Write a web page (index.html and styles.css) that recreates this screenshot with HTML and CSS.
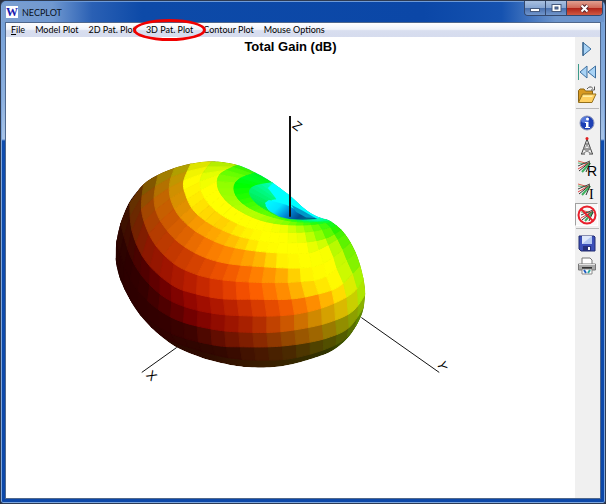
FILE: index.html
```html
<!DOCTYPE html>
<html lang="en">

<head>
    <meta charset="UTF-8">
    <meta name="viewport" content="width=device-width, initial-scale=1.0">
    <title>NECPLOT</title>
    <link rel="stylesheet" href="styles.css">
</head>

<body>
    <div class="window">
        <!-- title bar -->
        <header class="titlebar">
            <span class="logo">W</span>
            <span class="title">NECPLOT</span>
            <div class="controls">
                <button class="ctl min" aria-label="Minimize"><svg width="12" height="9"><rect x="1.500" y="4.500" width="9" height="3" fill="#fff" stroke="#45597c"/></svg></button>
                <button class="ctl max" aria-label="Maximize"><svg width="11" height="9"><rect x="1" y="0.500" width="9" height="7" fill="#fff" stroke="#45597c"/><rect x="4" y="3" width="3" height="2" fill="#5b7cb4" stroke="#45597c"/></svg></button>
                <button class="ctl close" aria-label="Close"><svg width="11" height="9"><path d="M2.500 1.500L8.500 7.500M8.500 1.500L2.500 7.500" stroke="#5b2a30" stroke-width="4"/><path d="M2.500 1.500L8.500 7.500M8.500 1.500L2.500 7.500" stroke="#fff" stroke-width="2"/></svg></button>
            </div>
        </header>

        <div class="client">
            <!-- menu -->
            <nav class="menu">
                <button><u>F</u>ile</button>
                <button>Model Plot</button>
                <button>2D Pat. Plot</button>
                <button class="marked">3D Pat. Plot</button>
                <button>Contour Plot</button>
                <button>Mouse Options</button>
            </nav>

            <div class="work">
                <!-- plot -->
                <main class="plot">
                    <h1>Total Gain (dB)</h1>
                    <svg class="scene" viewBox="0 0 570 440" preserveAspectRatio="xMidYMin meet">
                        <defs>
                            <clipPath id="shape">
                                <path id="outline" d=""/>
                            </clipPath>
                            <linearGradient id="base" x1="0" x2="1" y1="0" y2="0">
                                <stop offset="0" stop-color="#280400"/>
                                <stop offset="0.350" stop-color="#2e0a00"/>
                                <stop offset="0.600" stop-color="#3a1e00"/>
                                <stop offset="0.850" stop-color="#303400"/>
                                <stop offset="1" stop-color="#508000"/>
                            </linearGradient>
                            <linearGradient id="well" x1="0" x2="1" y1="0" y2="0.400">
                                <stop offset="0" stop-color="#00ffff"/>
                                <stop offset="0.350" stop-color="#00e4ff"/>
                                <stop offset="0.600" stop-color="#0088d8"/>
                                <stop offset="0.850" stop-color="#004c90"/>
                                <stop offset="1" stop-color="#006488"/>
                            </linearGradient>
                        </defs>
                        <g class="axis">
                            <path d="M356 263L434 318M171 293L136 318"/>
                            <text transform="translate(146 321) rotate(46)">X</text>
                            <text transform="translate(437 311) rotate(75)">Y</text>
                            <text transform="translate(292 71) rotate(38)">Z</text>
                        </g>
                        <g transform="translate(104 100) scale(0.333333)">
                            <g id="lobe" clip-path="url(#shape)"></g>
                        </g>
                        <path class="axis" d="M284.500 61V162" stroke-width="2"/>
                    </svg>
                </main>

                <!-- tool buttons -->
                <aside class="tools">
                    <button aria-label="Play"><svg viewBox="0 0 20 20"><path d="M6 3.500V16.500L14 10Z" fill="#a9d3f5" stroke="#3d6f9f"/><path d="M6 3V17" stroke="#27527c"/></svg></button>
                    <button aria-label="Rewind"><svg viewBox="0 0 20 20"><path d="M1.500 2V18" stroke="#3c9a8a"/><path d="M10 4V16L3 10ZM18.500 4V16L11 10Z" fill="#a9d3f5" stroke="#3d6f9f"/></svg></button>
                    <button aria-label="Open"><svg viewBox="0 0 20 20"><path d="M1.500 17V5.500L3 4H7L8.500 6H15.500V9" fill="#d99a20" stroke="#8a6414"/><path d="M1.500 17.500L5.500 9H19L15 17.500Z" fill="#ffd060" stroke="#94701c"/><path d="M6 10.500H16L15 12H6Z" fill="#fff0a8"/><path d="M10 4Q13 0 16 3.500M17.500 1.500V5H14" fill="none" stroke="#555"/></svg></button>
                    <hr>
                    <button aria-label="Info"><svg viewBox="0 0 20 20"><circle cx="10" cy="10" r="7" fill="#1c3fb4" stroke="#8a94b8"/><ellipse cx="8" cy="7" rx="4" ry="3" fill="#6d92ea" opacity="0.700"/><circle cx="10.500" cy="6" r="1.500" fill="#fff"/><path d="M8 9H11.500V14H13V15H8V14H9V10H8Z" fill="#fff"/></svg></button>
                    <button aria-label="Antenna"><svg viewBox="0 0 20 20"><path d="M10 3L4.500 18M10 3L15.500 18M4 18H8M12 18H16M8.500 8H11.500M6.500 13H13.500" fill="none" stroke="#444"/><path d="M8.500 8L13.500 13M11.500 8L6.500 13L15 18M13.500 13L5 18" fill="none" stroke="#888"/><circle cx="10" cy="2.500" r="1.500" fill="#e02020"/></svg></button>
                    <button class="wave" aria-label="Real part"><svg viewBox="0 0 20 20"><use href="#rays"/><text x="10" y="17">R</text></svg></button>
                    <button class="wave" aria-label="Imaginary part"><svg viewBox="0 0 20 20"><use href="#rays"/><text class="serif" x="12" y="17">I</text></svg></button>
                    <button class="on" aria-label="No currents"><svg viewBox="0 0 20 20"><use href="#rays" x="3" y="3"/><circle cx="10" cy="10" r="8.500" fill="none" stroke="#e8202c" stroke-width="2"/><path d="M4 4L16 16" stroke="#e8202c" stroke-width="2"/></svg></button>
                    <hr>
                    <button aria-label="Save"><svg viewBox="0 0 20 20"><path d="M2 3H17L18 4V18H4L2 16Z" fill="#3c50b8" stroke="#222c70"/><rect x="5" y="3" width="10" height="8" fill="#dfe8fa"/><path d="M5 11L15 3V11Z" fill="#b4c8f0"/><rect x="6" y="13" width="8" height="5" fill="#26307a"/><rect x="11" y="14" width="2" height="3" fill="#fff"/></svg></button>
                    <button aria-label="Print"><svg viewBox="0 0 20 20"><path d="M5 8V2H13L15 4V8" fill="#fff" stroke="#777"/><path d="M1.500 8H18.500V14H1.500Z" fill="#a8a8a8" stroke="#777"/><path d="M2 8.500H18" stroke="#e4e4e4"/><rect x="5" y="11" width="10" height="2" fill="#333"/><path d="M5 13H15V18H5Z" fill="#fff" stroke="#888"/><path d="M7 14L9 17" stroke="#205cc0" stroke-width="2"/><path d="M11 17L13 14" stroke="#30a8a0" stroke-width="2"/></svg></button>
                </aside>
            </div>
        </div>
    </div>

    <!-- shared ray bundle of the current icons -->
    <svg class="defs" width="0" height="0">
        <defs>
            <g id="rays" fill="none">
                <path d="M1 2L12 5" stroke="#e06050"/>
                <path d="M1 4L12 5" stroke="#58b070"/>
                <path d="M1 7L13 2" stroke="#444"/>
                <path d="M1 10L13 3" stroke="#e04040"/>
                <path d="M2 12L13 3" stroke="#333"/>
                <path d="M5 13L13 4" stroke="#40b060" stroke-width="2"/>
                <path d="M9 13L13 4" stroke="#333"/>
            </g>
        </defs>
    </svg>

    <script src="lobe.js"></script>
</body>

</html>
```

FILE: styles.css
```css
* {
    box-sizing: border-box;
}

body {
    margin: 0;
    background-color: #2b3140;
    font-family: Lato, "Open Sans", sans-serif;
    font-size: 9px;
}

button {
    padding: 0;
    border: 0;
    background: none;
    font: inherit;
    color: inherit;
}

svg {
    display: block;
}

.defs {
    position: absolute;
}

/* window frame */
.window {
    display: flex;
    flex-direction: column;
    min-height: 100vh;
    padding: 0 4px 4px;
    border: 1px solid #2e3b52;
    border-radius: 6px 6px 3px 3px;
    background: linear-gradient(#6d9ad4 0, #8fb2df 100px, #a8c4e8 138px, #0f4cad 140px, #0c47a8 100%);
    box-shadow: inset 0 0 0 1px #7ea6dc;
}

.titlebar {
    display: flex;
    align-items: center;
    height: 21px;
    margin: 0 -3px;
    padding-left: 4px;
    border-top: 1px solid #6d9ad8;
    border-radius: 5px 5px 0 0;
    background: linear-gradient(90deg, #7ca0d0 0, #7098d0 50px, #2a60b4 90px, #0d4aa8 140px, #0b47a7 70%, #1552b0 83%, #6c94cc 92%, #6c94cc 100%);
}

.logo {
    width: 12px;
    height: 12px;
    background-color: #fff;
    color: #1c1cb0;
    font: bold 12px/12px "Liberation Serif", serif;
    text-align: center;
}

.title {
    margin-left: 4px;
    color: #0a1222;
}

.controls {
    display: flex;
    align-self: flex-start;
    margin: -1px 1px 0 auto;
    border: 1px solid #34496f;
    border-top: 0;
    border-radius: 0 0 4px 4px;
    overflow: hidden;
}

.ctl {
    display: flex;
    align-items: center;
    justify-content: center;
    width: 21px;
    height: 14px;
    border-right: 1px solid #34496f;
    background: linear-gradient(#a9c0e0 0, #86a5d2 48%, #4a70ae 52%, #7196cc 100%);
}

.ctl.close {
    width: 35px;
    border-right: 0;
    background: linear-gradient(#e0a090 0, #d06a58 48%, #b02418 52%, #d05a44 100%);
}

.client {
    flex: 1;
    display: flex;
    flex-direction: column;
    border: 1px solid #50688c;
    background-color: #fff;
}

/* menu */
.menu {
    display: flex;
    align-items: center;
    gap: 10px;
    height: 14px;
    padding-left: 5px;
    background: linear-gradient(#fff 0, #f0f3fa 45%, #d8deef 55%, #d6dcee 100%);
    color: #000;
}

.menu button {
    line-height: 14px;
    white-space: nowrap;
}

.marked {
    position: relative;
}

/* red ring drawn over the neighbours */
.marked::after {
    content: "";
    position: absolute;
    inset: -4px -13px;
    z-index: 1;
    border: 3px solid #f00000;
    border-radius: 50%;
}

.work {
    flex: 1;
    display: flex;
}

/* plot */
.plot {
    flex: 1;
    min-width: 0;
}

.plot h1 {
    margin: 0;
    padding-top: 2px;
    font: bold 13px/16px "Liberation Sans", sans-serif;
    color: #000;
    text-align: center;
}

.scene {
    width: 100%;
}

.axis {
    fill: none;
    stroke: #111;
}

.axis text {
    fill: #000;
    stroke: none;
    font: 13px "Liberation Sans", sans-serif;
    text-anchor: middle;
    dominant-baseline: central;
}

#lobe {
    stroke-width: 3;
}

/* tool buttons */
.tools {
    width: 25px;
    background-color: #f0f0f0;
}

.tools button {
    display: flex;
    align-items: center;
    justify-content: center;
    width: 23px;
    height: 23px;
}

.tools button svg {
    width: 20px;
    height: 20px;
    overflow: visible;
}

.tools hr {
    margin: 2px 1px;
    border: 0;
    border-top: 1px solid #b8b8b8;
}

.tools .on {
    border: 1px solid #a0a0a0;
    border-color: #a0a0a0 #fff #fff #a0a0a0;
    background-color: #f8f8f8;
}

.wave text {
    font: 14px "Liberation Sans", sans-serif;
    fill: #000;
}

.wave .serif {
    font-family: "Liberation Serif", serif;
}
```

FILE: lobe.js
```js
// silhouette of the lobe
var outline = [[18, 300], [20, 260], [34, 200], [55, 148], [80, 112], [110, 81], [155, 55], [220, 32], [290, 20], [330, 21], [385, 31],
    [430, 50], [480, 78], [540, 122], [590, 166], [625, 186], [662, 199], [700, 230], [730, 275], [752, 330], [766, 395],
    [766, 435], [755, 485], [720, 545], [670, 588], [610, 612], [540, 631], [480, 639], [410, 638], [350, 629], [280, 611],
    [200, 578], [140, 533], [90, 480], [55, 425], [30, 370], [19, 325]];

// latitude lines from the bottom to the top
var lines = [
    [[20, 350], [60, 450], [130, 525], [200, 565], [320, 602], [390, 614], [455, 617], [540, 613], [640, 587], [710, 550], [762, 480]],
    [[16, 310], [60, 430], [130, 505], [205, 545], [320, 573], [400, 577], [500, 576], [590, 565], [660, 548], [720, 518], [768, 450]],
    [[18, 255], [50, 350], [90, 415], [150, 468], [220, 503], [320, 526], [405, 533], [495, 533], [580, 522], [660, 503], [730, 470], [770, 415]],
    [[32, 205], [60, 300], [100, 368], [160, 425], [230, 458], [320, 478], [410, 484], [500, 484], [575, 476], [655, 454], [730, 415], [766, 365]],
    [[60, 145], [65, 220], [90, 290], [130, 345], [190, 393], [240, 413], [330, 432], [430, 434], [535, 434], [610, 422], [690, 395], [758, 325]],
    [[102, 85], [95, 160], [110, 220], [140, 275], [190, 325], [240, 352], [300, 370], [380, 380], [480, 384], [570, 381], [650, 365], [742, 290]],
    [[145, 60], [133, 130], [145, 185], [180, 237], [220, 273], [280, 306], [350, 326], [440, 335], [575, 340], [650, 322], [727, 260]],
    [[195, 38], [180, 85], [182, 130], [205, 180], [245, 220], [290, 248], [350, 273], [430, 288], [520, 295], [610, 292], [712, 236]],
    [[245, 24], [222, 80], [228, 120], [250, 165], [290, 200], [340, 227], [400, 248], [490, 263], [580, 263], [650, 250], [700, 222]],
    [[310, 16], [277, 60], [272, 95], [285, 130], [315, 165], [360, 195], [420, 220], [490, 232], [560, 233], [620, 228], [688, 210]],
    [[390, 28], [335, 55], [323, 85], [335, 120], [370, 155], [430, 188], [490, 205], [560, 211], [620, 208], [672, 199]],
    [[445, 52], [390, 72], [373, 100], [388, 135], [430, 165], [490, 187], [545, 199], [600, 202], [660, 196]],
    [[500, 82], [435, 94], [420, 115], [440, 145], [480, 170], [510, 185], [560, 195], [620, 197], [640, 194]],
    [[545, 125], [490, 134], [467, 148], [480, 170], [510, 185], [540, 192], [580, 194], [620, 194], [630, 190]]
];

// colours of each band, left to right
var bands = [
    '280400 2a0400 2e0200 300200 300600 340800 481600 4a2800 504400 546000 609000',
    '280400 2c0000 300000 340000 400400 6c1000 882400 944600 a06800 909400 88b800',
    '300800 2c0000 340000 500000 780000 981000 b02800 cc5400 d08c00 dcc000 a0f000',
    '3c1400 400800 500000 700000 980800 b41c00 d43800 f05800 ff9000 ffe800 90f800',
    '603400 702400 8c1800 a01400 bc2000 dc3800 fc5800 ff8800 ffd800 ffff00 60f000',
    '785c00 a04800 b43c00 c43800 d84400 f05400 ff7800 ffa800 fff800 ffff00 50f000',
    '988400 c06800 cc5800 e06400 f87800 ff8c00 ffac00 fff000 ffff00 f8ff00 30f000',
    'a8a400 cc9000 e09000 f89800 ffa800 ffc400 fff800 ffff00 ffff00 c8ff00 20f000',
    'd4dc00 ffff00 ffec00 ffd800 ffd000 fff000 ffff00 ffff00 e8ff00 80ff00 10f000',
    'a8e800 e0ff00 ffff00 ffff00 ffff00 ffff00 ffff00 f0ff00 b0ff00 60ff00 00f820',
    '30f000 60ff00 90ff00 a0ff00 b0ff00 b8ff00 a0ff00 88ff00 58ff00 20ff10 00ff50',
    '00f020 00ff20 00ff00 20ff00 48ff00 60ff00 60ff00 40ff00 20ff20 00ff60 00ff90',
    '00ffd0 00ffa8 00f880 00f060 00f040 20f030 30f020 20f840 00f860 00ff90 00ffb0'
];

var ns = 'http://www.w3.org/2000/svg';
var lobe = document.getElementById('lobe');

// smooth a point list (Catmull-Rom)
function smooth(p) {
    var out = [];
    for (var i = 0; i < p.length - 1; i++) {
        var a = p[Math.max(i - 1, 0)], b = p[i], c = p[i + 1], d = p[Math.min(i + 2, p.length - 1)];
        for (var s = 0; s < 8; s++) {
            var t = s / 8;
            out.push([0, 1].map(function (k) {
                return 0.5 * (2 * b[k] + (c[k] - a[k]) * t + (2 * a[k] - 5 * b[k] + 4 * c[k] - d[k]) * t * t
                    + (3 * b[k] - a[k] - 3 * c[k] + d[k]) * t * t * t);
            }));
        }
    }
    out.push(p[p.length - 1]);
    return out;
}

// n + 1 points at equal distances
function divide(p, n) {
    var len = [0];
    for (var i = 1; i < p.length; i++) {
        len.push(len[i - 1] + Math.hypot(p[i][0] - p[i - 1][0], p[i][1] - p[i - 1][1]));
    }
    var out = [], j = 1;
    for (var k = 0; k <= n; k++) {
        var want = len[len.length - 1] * k / n;
        while (j < p.length - 1 && len[j] < want) j++;
        var f = (want - len[j - 1]) / (len[j] - len[j - 1]);
        out.push([p[j - 1][0] + (p[j][0] - p[j - 1][0]) * f, p[j - 1][1] + (p[j][1] - p[j - 1][1]) * f]);
    }
    return out;
}

function shade(list, t) {
    var pos = t * (list.length - 1), i = Math.min(Math.floor(pos), list.length - 2), f = pos - i;
    var rgb = [0, 2, 4].map(function (k) {
        var a = parseInt(list[i].substr(k, 2), 16), b = parseInt(list[i + 1].substr(k, 2), 16);
        return Math.round(a + (b - a) * f);
    });
    return 'rgb(' + rgb.join(',') + ')';
}

function add(points, fill, line) {
    var el = document.createElementNS(ns, 'polygon');
    el.setAttribute('points', points.join(' '));
    el.setAttribute('fill', fill);
    el.setAttribute('stroke', line || 'none');
    lobe.appendChild(el);
}

var edge = smooth(outline.concat([outline[0]]));
document.getElementById('outline').setAttribute('d', 'M' + edge.join('L') + 'Z');
add(edge, 'url(#base)');

// inside of the hole, far wall first
add([[380, 20], [480, 60], [560, 120], [600, 165], [670, 205], [540, 210], [440, 190], [400, 100]], '#00ffff');

var sub = 4, n = 22;
var rows = lines.map(function (l) { return divide(smooth(l), n * sub); });
for (var r = 0; r < bands.length; r++) {
    var list = bands[r].split(' ');
    for (var c = 0; c < n; c++) {
        var low = rows[r].slice(c * sub, (c + 1) * sub + 1);
        var high = rows[r + 1].slice(c * sub, (c + 1) * sub + 1).reverse();
        var fill = shade(list, (c + 0.5) / n);
        add(low.concat(high), fill, fill);
    }
}

// well down the z axis
add([[500, 76], [545, 118], [590, 160], [630, 190], [580, 194], [530, 190], [505, 155], [500, 132], [475, 100]], '#00ffff');
add([[466, 145], [478, 136], [500, 142], [530, 150], [560, 165], [600, 184], [625, 193], [580, 195], [540, 193], [510, 186], [482, 170]], 'url(#well)');
add([[545, 150], [580, 168], [618, 190], [590, 188], [560, 172]], '#0098c8');
```
